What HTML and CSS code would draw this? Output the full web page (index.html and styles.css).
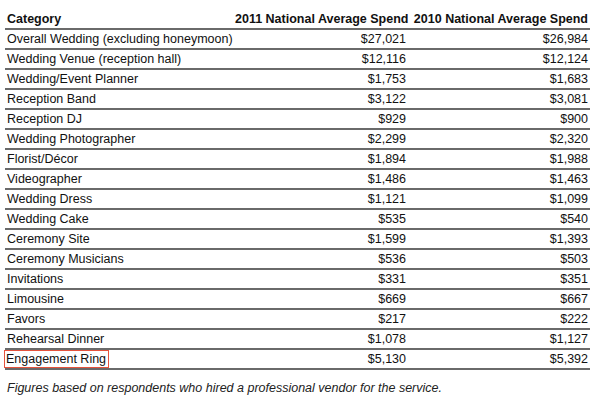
FILE: index.html
```html
<!DOCTYPE html>
<html>
<head>
<meta charset="utf-8">
<link rel="stylesheet" href="styles.css">
</head>
<body>
<table class="spend">
  <colgroup><col class="c1"><col class="c2"><col class="c3"></colgroup>
  <thead>
    <tr><th>Category</th><th class="num">2011 National Average Spend</th><th class="num">2010 National Average Spend</th></tr>
  </thead>
  <tbody>
    <tr><td>Overall Wedding (excluding honeymoon)</td><td class="num">$27,021</td><td class="num">$26,984</td></tr>
    <tr><td>Wedding Venue (reception hall)</td><td class="num">$12,116</td><td class="num">$12,124</td></tr>
    <tr><td>Wedding/Event Planner</td><td class="num">$1,753</td><td class="num">$1,683</td></tr>
    <tr><td>Reception Band</td><td class="num">$3,122</td><td class="num">$3,081</td></tr>
    <tr><td>Reception DJ</td><td class="num">$929</td><td class="num">$900</td></tr>
    <tr><td>Wedding Photographer</td><td class="num">$2,299</td><td class="num">$2,320</td></tr>
    <tr><td>Florist/Décor</td><td class="num">$1,894</td><td class="num">$1,988</td></tr>
    <tr><td>Videographer</td><td class="num">$1,486</td><td class="num">$1,463</td></tr>
    <tr><td>Wedding Dress</td><td class="num">$1,121</td><td class="num">$1,099</td></tr>
    <tr><td>Wedding Cake</td><td class="num">$535</td><td class="num">$540</td></tr>
    <tr><td>Ceremony Site</td><td class="num">$1,599</td><td class="num">$1,393</td></tr>
    <tr><td>Ceremony Musicians</td><td class="num">$536</td><td class="num">$503</td></tr>
    <tr><td>Invitations</td><td class="num">$331</td><td class="num">$351</td></tr>
    <tr><td>Limousine</td><td class="num">$669</td><td class="num">$667</td></tr>
    <tr><td>Favors</td><td class="num">$217</td><td class="num">$222</td></tr>
    <tr><td>Rehearsal Dinner</td><td class="num">$1,078</td><td class="num">$1,127</td></tr>
    <tr><td><span class="mark">Engagement Ring</span></td><td class="num">$5,130</td><td class="num">$5,392</td></tr>
  </tbody>
</table>
<p class="note">Figures based on respondents who hired a professional vendor for the service.</p>
</body>
</html>
```
FILE: styles.css
```css
html, body {
  margin: 0;
  padding: 0;
  background: #ffffff;
}
body {
  padding: 10px 0 0 5px;
  font-family: "Liberation Sans", Arial, sans-serif;
  font-size: 12.5px;
  color: #111;
}
.spend {
  border-collapse: collapse;
  table-layout: fixed;
  width: 585px;
}
.c1 { width: 228px; }
.c2 { width: 175px; }
.c3 { width: 182px; }
.spend th, .spend td {
  padding: 0 2px;
  height: 18px;
  line-height: 18px;
  border-bottom: 2px solid #6a6a6a;
  white-space: nowrap;
  text-align: left;
  font-weight: normal;
}
.spend th {
  font-weight: bold;
}
.spend .num {
  text-align: right;
}
.mark {
  display: inline-block;
  outline: 1px solid #e5533d;
  padding: 0 2px 0 1px;
  margin-left: -2px;
  line-height: 16px;
}
.note {
  margin: 11px 0 0 2px;
  font-style: italic;
  font-size: 12.5px;
  color: #222;
}
```
